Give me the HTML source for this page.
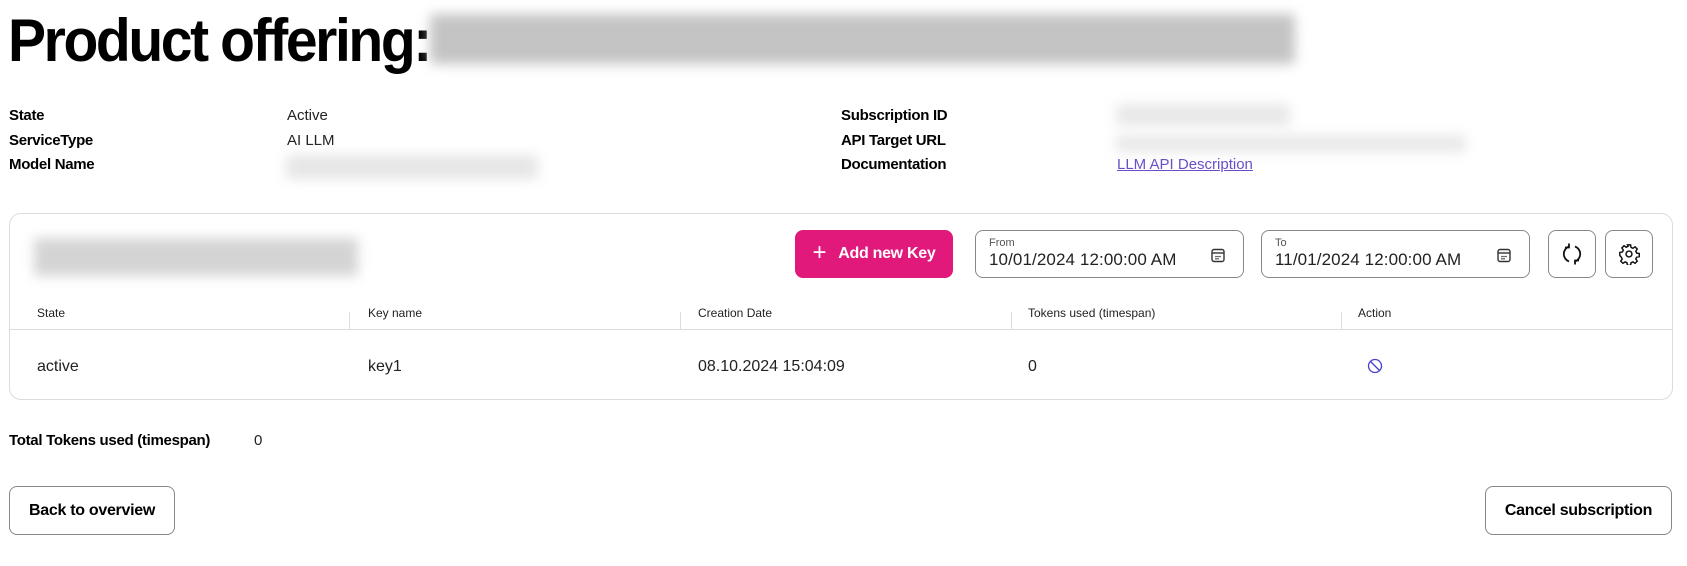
<!DOCTYPE html>
<html><head><meta charset="utf-8"><style>
*{box-sizing:border-box;margin:0;padding:0}
body{width:1687px;height:566px;background:#fff;font-family:"Liberation Sans",sans-serif;color:#000;position:relative;overflow:hidden}
.a{position:absolute;white-space:nowrap}
.blur{position:absolute;background:#ddd;filter:blur(6px);border-radius:4px}
.lbl{font-size:15px;font-weight:bold;letter-spacing:-0.3px}
.val{font-size:15px;color:#222}
.card{position:absolute;left:9px;top:213px;width:1664px;height:187px;border:1px solid #dcdcdc;border-radius:12px}
.btn{position:absolute;border:1px solid #888;border-radius:8px;background:#fff;display:flex;align-items:center;justify-content:center;font-size:16px;font-weight:bold;letter-spacing:-0.3px}
.field{position:absolute;border:1px solid #888;border-radius:8px;height:48px;top:230px}
.field .s{position:absolute;left:13px;top:6px;font-size:11px;color:#555}
.field .v{position:absolute;left:13px;top:19px;font-size:17px;color:#222;letter-spacing:0.1px}
.th{position:absolute;top:306px;font-size:12px;color:#222}
.td{position:absolute;top:358px;font-size:16px;color:#222}
.sep{position:absolute;top:312px;height:18px;width:1px;background:#ddd}
</style></head><body>
<div class="a" style="left:8px;top:6px;font-size:60px;font-weight:bold;letter-spacing:-2.5px;transform:scaleX(0.95);transform-origin:left">Product offering:</div>
<div class="blur" style="left:430px;top:14px;width:865px;height:50px;background:#c4c4c4"></div>

<div class="a lbl" style="left:9px;top:107px">State</div>
<div class="a lbl" style="left:9px;top:132px">ServiceType</div>
<div class="a lbl" style="left:9px;top:156px">Model Name</div>
<div class="a val" style="left:287px;top:107px">Active</div>
<div class="a val" style="left:287px;top:132px">AI LLM</div>
<div class="blur" style="left:286px;top:155px;width:252px;height:24px;background:#e6e6e6"></div>
<div class="a lbl" style="left:841px;top:107px">Subscription ID</div>
<div class="a lbl" style="left:841px;top:132px">API Target URL</div>
<div class="a lbl" style="left:841px;top:156px">Documentation</div>
<div class="blur" style="left:1116px;top:104px;width:174px;height:22px;background:#e8e8e8"></div>
<div class="blur" style="left:1116px;top:135px;width:350px;height:17px;background:#e8e8e8"></div>
<div class="a" style="left:1117px;top:156px;font-size:15px;color:#6a4fc8;text-decoration:underline">LLM API Description</div>

<div class="card"></div>
<div class="blur" style="left:34px;top:238px;width:324px;height:38px;background:#d4d4d4"></div>
<div class="btn" style="left:795px;top:230px;width:158px;height:48px;background:#e0197a;border-color:#e0197a;color:#fff"><span style="font-size:24px;font-weight:normal;margin-right:12px;margin-top:-3px">+</span>Add new Key</div>
<div class="field" style="left:975px;width:269px"><div class="s">From</div><div class="v">10/01/2024 12:00:00 AM</div>
<svg style="position:absolute;right:18px;top:17px" width="14" height="15" viewBox="0 0 14 15"><rect x="1" y="1.5" width="12" height="12" rx="2" fill="none" stroke="#333" stroke-width="1.4"/><line x1="1" y1="5" x2="13" y2="5" stroke="#333" stroke-width="1.4"/><circle cx="5" cy="8.5" r=".8" fill="#333"/><circle cx="7" cy="8.5" r=".8" fill="#333"/><circle cx="9" cy="8.5" r=".8" fill="#333"/><circle cx="5" cy="10.8" r=".8" fill="#333"/><circle cx="7" cy="10.8" r=".8" fill="#333"/></svg></div>
<div class="field" style="left:1261px;width:269px"><div class="s">To</div><div class="v">11/01/2024 12:00:00 AM</div>
<svg style="position:absolute;right:18px;top:17px" width="14" height="15" viewBox="0 0 14 15"><rect x="1" y="1.5" width="12" height="12" rx="2" fill="none" stroke="#333" stroke-width="1.4"/><line x1="1" y1="5" x2="13" y2="5" stroke="#333" stroke-width="1.4"/><circle cx="5" cy="8.5" r=".8" fill="#333"/><circle cx="7" cy="8.5" r=".8" fill="#333"/><circle cx="9" cy="8.5" r=".8" fill="#333"/><circle cx="5" cy="10.8" r=".8" fill="#333"/><circle cx="7" cy="10.8" r=".8" fill="#333"/></svg></div>
<div class="btn" style="left:1548px;top:230px;width:48px;height:48px"><svg width="22" height="22" viewBox="0 0 22 22" fill="none" stroke="#111" stroke-width="1.8"><path d="M8 3.5A8 8 0 0 0 8 18.5"/><path d="M14 18.5A8 8 0 0 0 14 3.5"/><path d="M8 0.5v4h-4" /><path d="M14 21.5v-4h4"/></svg></div>
<div class="btn" style="left:1605px;top:230px;width:48px;height:48px"><svg width="22" height="22" viewBox="0 0 24 24" fill="none" stroke="#111" stroke-width="1.6"><circle cx="12" cy="12" r="3.2"/><path d="M10.3 2h3.4l.5 2.8 2 1 2.4-1.6 2.4 2.4-1.6 2.4 1 2 2.8.5v3.4l-2.8.5-1 2 1.6 2.4-2.4 2.4-2.4-1.6-2 1-.5 2.8h-3.4l-.5-2.8-2-1-2.4 1.6-2.4-2.4 1.6-2.4-1-2L2 13.7v-3.4l2.8-.5 1-2L4.2 5.4l2.4-2.4 2.4 1.6 2-1z"/></svg></div>

<div class="th" style="left:37px">State</div>
<div class="th" style="left:368px">Key name</div>
<div class="th" style="left:698px">Creation Date</div>
<div class="th" style="left:1028px">Tokens used (timespan)</div>
<div class="th" style="left:1358px">Action</div>
<div class="sep" style="left:349px"></div><div class="sep" style="left:680px"></div><div class="sep" style="left:1011px"></div><div class="sep" style="left:1341px"></div>
<div class="a" style="left:10px;top:329px;width:1662px;height:1px;background:#ddd"></div>
<div class="td" style="left:37px">active</div>
<div class="td" style="left:368px">key1</div>
<div class="td" style="left:698px">08.10.2024 15:04:09</div>
<div class="td" style="left:1028px">0</div>
<svg class="a" style="left:1367px;top:358px" width="16" height="16" viewBox="0 0 16 16" fill="none" stroke="#4a40d0" stroke-width="1.3"><circle cx="8" cy="8" r="6.5"/><line x1="3.5" y1="3.5" x2="12.5" y2="12.5"/></svg>

<div class="a lbl" style="left:9px;top:432px;font-size:15px">Total Tokens used (timespan)</div>
<div class="a val" style="left:254px;top:432px">0</div>
<div class="btn" style="left:9px;top:486px;width:166px;height:49px">Back to overview</div>
<div class="btn" style="left:1485px;top:486px;width:187px;height:49px">Cancel subscription</div>
</body></html>
